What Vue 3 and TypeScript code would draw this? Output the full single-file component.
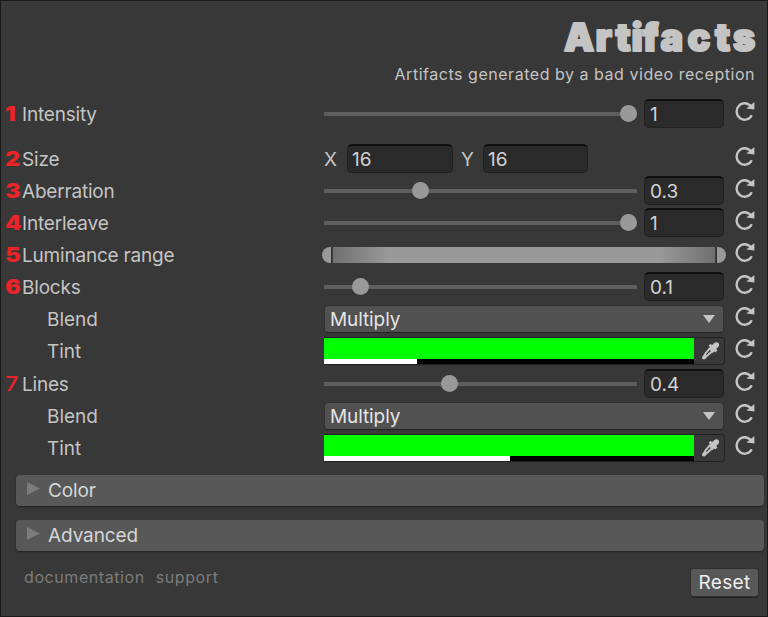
<script setup lang="ts">
import { ref } from 'vue'

type Kind = 'slider' | 'vector' | 'range' | 'select' | 'color'

interface Row {
  label: string
  kind: Kind
  index?: number
  value?: number
  vector?: { axis: string; value: number }[]
  option?: string
  alpha?: number
  child?: boolean
  tall?: boolean
  spaced?: boolean
}

const rows = ref<Row[]>([
  { index: 1, label: 'Intensity', kind: 'slider', value: 1, spaced: true },
  { index: 2, label: 'Size', kind: 'vector', vector: [{ axis: 'X', value: 16 }, { axis: 'Y', value: 16 }] },
  { index: 3, label: 'Aberration', kind: 'slider', value: 0.3 },
  { index: 4, label: 'Interleave', kind: 'slider', value: 1 },
  { index: 5, label: 'Luminance range', kind: 'range' },
  { index: 6, label: 'Blocks', kind: 'slider', value: 0.1 },
  { label: 'Blend', kind: 'select', option: 'Multiply', child: true },
  { label: 'Tint', kind: 'color', alpha: 0.252, child: true, tall: true },
  { index: 7, label: 'Lines', kind: 'slider', value: 0.4 },
  { label: 'Blend', kind: 'select', option: 'Multiply', child: true },
  { label: 'Tint', kind: 'color', alpha: 0.503, child: true },
])

const sections = ['Color', 'Advanced']
const links = ['documentation', 'support']
</script>

<template>
  <main class="panel">
    <header class="header">
      <h1 class="title">
        <svg width="196" height="46" viewBox="0 0 196 46">
          <text x="2 33.5 53.5 69.5 80.5 98.5 125.5 153 171" y="36.5">Artifacts</text>
        </svg>
      </h1>
      <p class="subtitle">Artifacts generated by a bad video reception</p>
    </header>

    <section class="rows">
      <div
        v-for="(row, i) in rows"
        :key="i"
        class="row"
        :class="{ tall: row.tall, spaced: row.spaced }"
      >
        <span class="index" :class="{ thin: row.index === 7 }">{{ row.index }}</span>
        <span class="label" :class="{ child: row.child }">{{ row.label }}</span>

        <div class="control" :class="row.kind">
          <template v-if="row.kind === 'slider'">
            <div class="slide">
              <div class="before" :style="{ width: (row.value ?? 0) * 297 - 1.5 + 'px' }"></div>
              <div class="thumb"></div>
            </div>
            <div class="field number">{{ row.value }}</div>
          </template>

          <template v-else-if="row.kind === 'vector'">
            <div v-for="part in row.vector" :key="part.axis" class="part">
              <span class="axis">{{ part.axis }}</span>
              <div class="field">{{ part.value }}</div>
            </div>
          </template>

          <div v-else-if="row.kind === 'range'" class="minmax">
            <span class="cap left"></span>
            <span class="gradient"></span>
            <span class="cap right"></span>
          </div>

          <div v-else-if="row.kind === 'select'" class="dropdown">
            <span>{{ row.option }}</span>
            <svg class="caret" width="12" height="8" viewBox="0 0 12 8"><path d="M0 0H12L6 8Z" /></svg>
          </div>

          <div v-else class="swatch">
            <div class="fill">
              <div class="alpha"><div class="level" :style="{ width: (row.alpha ?? 0) * 100 + '%' }"></div></div>
            </div>
            <div class="picker">
              <svg width="17" height="18" viewBox="0 0 17 18">
                <path class="solid" d="M10 3.2 12.2 1Q14.6-.6 16.3.9T16.4 4.8L14.2 7 15.4 8.4 13.4 10.4 6.6 3.6 8.6 1.7Z" />
                <path class="tube" d="M8 6.2 3.3 11.6 2.8 14.2 5.4 13.6 11 8.6" />
                <path class="solid" d="M8.6 4.7 12.8 8.9 10.8 11 6.2 6.6ZM2.2 12 5.3 15 2.5 17.4 .3 16.9 .1 14.9Z" />
              </svg>
            </div>
          </div>
        </div>

        <svg class="reset-icon" width="20" height="20" viewBox="0 0 20 20">
          <path class="arc" d="M15.8 5.2A8 8.2 0 1 0 16.8 14.2" />
          <path class="head" d="M19.4 1V8.4L11.4 7.6Z" />
        </svg>
      </div>
    </section>

    <section class="sections">
      <div v-for="name in sections" :key="name" class="foldout">
        <svg width="13" height="13" viewBox="0 0 13 13"><path d="M0 0V13L13 6.5Z" /></svg>
        <span>{{ name }}</span>
      </div>
    </section>

    <footer class="footer">
      <nav class="links"><a v-for="link in links" :key="link">{{ link }}</a></nav>
      <button class="reset" type="button">Reset</button>
    </footer>
  </main>
</template>

<style>
body {
  margin: 0;
  background: #383838;
}
</style>

<style scoped>
.panel {
  box-sizing: border-box;
  width: 768px;
  height: 617px;
  border: 1px solid #191919;
  background: #383838;
  color: #c4c4c4;
  font: 19px/32px Inter, "Liberation Sans", sans-serif;
  overflow: hidden;
}
.header {
  display: flex;
  flex-direction: column;
  align-items: flex-end;
  height: 97px;
}
.title {
  margin: 13px 9px 0 0;
  height: 46px;
  font-size: 38px;
  line-height: 46px;
  font-weight: 900;
}
.title svg {
  display: block;
  fill: #c4c4c4;
  stroke: #c4c4c4;
  stroke-width: 2px;
  stroke-linejoin: round;
}
.subtitle {
  margin: 3px 12px 0 0;
  font-size: 16px;
  line-height: 22px;
  letter-spacing: 0.53px;
}
.row {
  display: grid;
  grid-template-columns: 21px 302px 400px 20px;
  height: 32px;
}
.row.tall { height: 33px; }
.row.spaced { margin-bottom: 13px; }
.index {
  padding-left: 5px;
  color: #ec2427;
  font-weight: 900;
  font-size: 20px;
  line-height: 32px;
  transform: scaleX(1.15);
}
.index.thin { font-weight: 500; }
.label {
  line-height: 33px;
  letter-spacing: -0.2px;
}
.label.child {
  padding-left: 25px;
  letter-spacing: -0.05px;
}
.control {
  display: flex;
  align-items: flex-start;
  min-width: 0;
}
.slide {
  display: flex;
  align-items: center;
  width: 313px;
  height: 31px;
  background: linear-gradient(#5e5e5e, #5e5e5e) 0 14px / 100% 4px no-repeat;
}
.before { flex: none; }
.thumb {
  width: 17px;
  height: 17px;
  border-radius: 50%;
  background: #999;
}
.field {
  box-sizing: border-box;
  width: 106px;
  height: 29px;
  margin-top: 1px;
  padding-left: 4px;
  border: 1px solid #212121;
  border-top: 2px solid #0e0e0e;
  border-radius: 5px;
  background: #2a2a2a;
  color: #d2d2d2;
  line-height: 27px;
}
.number {
  width: 80px;
  margin-left: 7px;
  padding-left: 5px;
}
.part { display: flex; }
.axis {
  width: 23px;
  line-height: 33px;
}
.part + .part { margin-left: 8px; }
.part + .part .axis { width: 22px; }
.part + .part .field { width: 105px; }
.minmax {
  display: flex;
  gap: 2px;
  flex: none;
  width: 404px;
  height: 16px;
  margin: 8px 0 0 -2px;
}
.cap {
  width: 9px;
  background: #999;
}
.cap.left { border-radius: 8px 0 0 8px; }
.cap.right { border-radius: 0 8px 8px 0; }
.gradient {
  flex: 1;
  background: linear-gradient(90deg, #707070, #999 56px, #999 calc(100% - 56px), #707070);
}
.dropdown {
  box-sizing: border-box;
  display: flex;
  align-items: center;
  justify-content: space-between;
  width: 400px;
  height: 28px;
  margin-top: 2px;
  padding: 0 8px 0 5px;
  border: 1px solid #303030;
  border-bottom-color: #242424;
  border-radius: 4px;
  background: #515151;
  color: #e4e4e4;
  line-height: 27px;
  letter-spacing: -0.1px;
}
.caret { fill: #c4c4c4; }
.swatch {
  box-sizing: border-box;
  display: flex;
  flex: none;
  width: 401px;
  height: 28px;
  margin-top: 2px;
  border: 1px solid #202020;
  border-left: 0;
  border-radius: 0 4px 4px 0;
}
.fill {
  display: flex;
  flex: none;
  flex-direction: column;
  justify-content: flex-end;
  width: 370px;
  height: 26px;
  background: #00ff00;
}
.alpha {
  height: 5px;
  background: #000;
}
.level {
  height: 100%;
  background: #fff;
}
.picker {
  display: flex;
  align-items: center;
  padding-left: 8px;
}
.solid { fill: #c4c4c4; }
.tube {
  fill: none;
  stroke: #c4c4c4;
  stroke-width: 2;
}
.reset-icon { margin: 3px 0 0 11px; }
.arc {
  fill: none;
  stroke: #c4c4c4;
  stroke-width: 2.4;
}
.head { fill: #c4c4c4; }
.sections {
  display: flex;
  flex-direction: column;
  gap: 14px;
  padding: 11px 3px 0 15px;
}
.foldout {
  display: flex;
  align-items: center;
  gap: 8px;
  height: 31px;
  padding-left: 11px;
  border-radius: 4px;
  background: #585858;
  box-shadow: 0 1px 2px #222;
  color: #d6d6d6;
  letter-spacing: -0.1px;
}
.foldout svg {
  margin-bottom: 4px;
  fill: #7c7c7c;
}
.footer {
  display: flex;
  justify-content: space-between;
  padding: 18px 9px 0 23px;
}
.links {
  display: flex;
  gap: 11px;
  color: #7c7c7c;
  font-size: 16px;
  line-height: 17px;
  letter-spacing: 0.58px;
}
.reset {
  box-sizing: border-box;
  width: 67px;
  height: 27px;
  padding: 0;
  border: 0;
  border-radius: 3px;
  background: #585858;
  box-shadow: 0 0 0 1px #303030, 0 2px 0 #222;
  color: #eee;
  font: 19px/28px Inter, "Liberation Sans", sans-serif;
  letter-spacing: 0.3px;
}
</style>
